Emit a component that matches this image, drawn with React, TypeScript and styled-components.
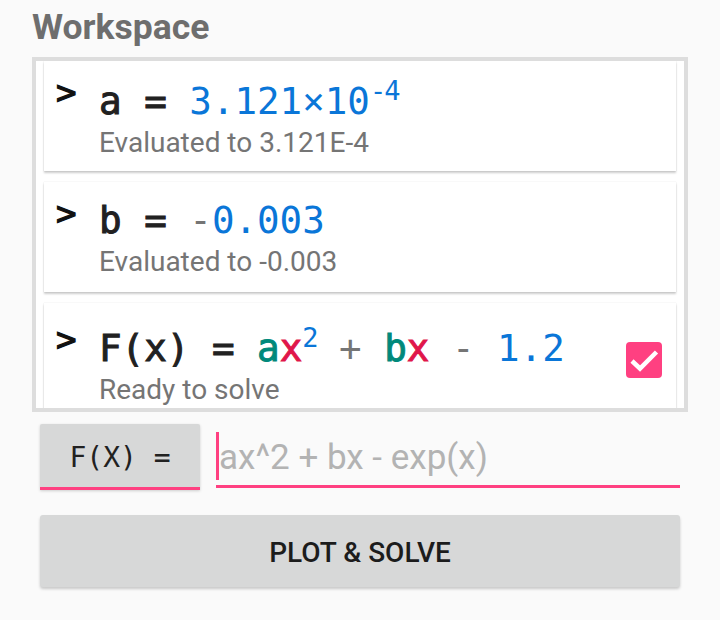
import React from "react";
import styled, { createGlobalStyle } from "styled-components";

const GlobalStyle = createGlobalStyle`
  html, body { margin: 0; padding: 0; background: #fafafa; }
  body { font-family: Roboto, "Noto Sans", sans-serif; }
  * { box-sizing: border-box; }
`;

const MONO = `"DejaVu Sans Mono", "Liberation Mono", monospace`;

const Page = styled.main`
  width: 720px;
  height: 620px;
  padding: 7px 32px 0 32px;
  background: #fafafa;
`;

const Title = styled.h1`
  margin: 0;
  font-family: Roboto, sans-serif;
  font-weight: 700;
  font-size: 35.5px;
  line-height: 40px;
  color: #6e6e6e;
`;

const Workspace = styled.section`
  margin-top: 10px;
  height: 355px;
  border: 4px solid #dddddd;
  background: #ffffff;
  overflow: hidden;
`;

const CardList = styled.div`
  display: flex;
  flex-direction: column;
  gap: 11px;
  padding: 0 8px 12px 8px;
`;

const Card = styled.article<{ $padTop: number }>`
  flex: none;
  height: 110px;
  display: flex;
  align-items: flex-start;
  padding: ${(p) => p.$padTop}px 14px 0 14px;
  background: #ffffff;
  box-shadow: 0 2px 2px rgba(0, 0, 0, 0.2), 0 0 1px rgba(0, 0, 0, 0.15);
`;

const Prompt = styled.span`
  flex: none;
  width: 43px;
  font-family: ${MONO};
  font-weight: 400;
  -webkit-text-stroke: 1.2px #111;
  font-size: 34px;
  line-height: 34px;
  color: #111;
  margin-top: -2px;
  margin-left: -2px;
`;

const Body = styled.div`
  flex: 1;
  min-width: 0;
  display: flex;
  flex-direction: column;
`;

const Expr = styled.div`
  font-family: ${MONO};
  font-size: 37.5px;
  line-height: 44px;
  font-weight: 400;
  -webkit-text-stroke: 1px #212121;
  color: #212121;
  white-space: pre;
`;

const Sym = styled.span<{ $c: string }>`
  color: ${(p) => p.$c};
  -webkit-text-stroke: 1px ${(p) => p.$c};
`;

const Num = styled.span`
  color: #0a76d8;
  -webkit-text-stroke: 0;
`;

const Op = styled.span`
  color: #757575;
  -webkit-text-stroke: 0;
`;

const Sup = styled.sup`
  font-size: 27px;
  line-height: 1;
  vertical-align: 14px;
  color: #0a76d8;
  -webkit-text-stroke: 0;
  letter-spacing: -2px;
`;

const Note = styled.div`
  font-family: Roboto, sans-serif;
  font-size: 28px;
  line-height: 40px;
  color: #757575;
  white-space: nowrap;
`;

const CheckBox = styled.span`
  flex: none;
  width: 36px;
  height: 36px;
  margin-top: 18px;
  border-radius: 4px;
  background: #ff4081;
  display: flex;
  align-items: center;
  justify-content: center;
`;

const InputRow = styled.div`
  display: flex;
  align-items: flex-start;
  gap: 16px;
  margin: 12px 8px 0 8px;
`;

const FxButton = styled.button`
  flex: none;
  width: 160px;
  height: 66px;
  padding: 3px 0 0 0;
  border: none;
  border-bottom: 3px solid #ff4081;
  border-radius: 2px 2px 0 0;
  background: #d7d8d8;
  box-shadow: 0 1px 3px rgba(0, 0, 0, 0.18);
  font-family: ${MONO};
  font-size: 28px;
  color: #212121;
  white-space: pre;
  display: flex;
  align-items: center;
  justify-content: center;
`;

const Field = styled.label`
  flex: 1;
  height: 64px;
  display: flex;
  align-items: flex-start;
  border-bottom: 3px solid #ff4081;
`;

const Caret = styled.span`
  flex: none;
  width: 3px;
  height: 48px;
  margin-top: 8px;
  background: #ff4081;
`;

const TextInput = styled.input`
  flex: 1;
  min-width: 0;
  height: 61px;
  padding: 5px 0 0 0;
  margin: 0;
  border: none;
  outline: none;
  background: transparent;
  font-family: Roboto, sans-serif;
  font-size: 35px;
  color: #212121;
  &::placeholder { color: #b3b3b3; }
`;

const SolveButton = styled.button`
  display: flex;
  align-items: center;
  justify-content: center;
  width: 640px;
  height: 72px;
  margin: 25px 8px 0 8px;
  padding: 3px 0 0 0;
  border: none;
  border-radius: 3px;
  background: #d7d8d8;
  box-shadow: 0 2px 3px rgba(0, 0, 0, 0.2);
  font-family: Roboto, sans-serif;
  font-weight: 500;
  font-size: 28px;
  color: #1c1c1c;
`;

const TEAL = "#00897b";
const RED = "#e0164a";

export default function App() {
  return (
    <>
      <GlobalStyle />
      <Page>
        <Title>Workspace</Title>
        <Workspace>
          <CardList>
            <Card $padTop={16}>
              <Prompt>&gt;</Prompt>
              <Body>
                <Expr>
                  a = <Num>3.121×10</Num>
                  <Sup>-4</Sup>
                </Expr>
                <Note>Evaluated to 3.121E-4</Note>
              </Body>
            </Card>
            <Card $padTop={16}>
              <Prompt>&gt;</Prompt>
              <Body>
                <Expr>
                  b = <Op>-</Op>
                  <Num>0.003</Num>
                </Expr>
                <Note>Evaluated to -0.003</Note>
              </Body>
            </Card>
            <Card $padTop={21}>
              <Prompt>&gt;</Prompt>
              <Body>
                <Expr>
                  F(x) = <Sym $c={TEAL}>a</Sym>
                  <Sym $c={RED}>x</Sym>
                  <Sup>2</Sup> <Op>+</Op> <Sym $c={TEAL}>b</Sym>
                  <Sym $c={RED}>x</Sym> <Op>-</Op> <Num>1.2</Num>
                </Expr>
                <Note>Ready to solve</Note>
              </Body>
              <CheckBox>
                <svg width="36" height="36" viewBox="0 0 36 36">
                  <path d="M6 19 L14 26.5 L30.5 10" fill="none" stroke="#fff" strokeWidth="4.5" />
                </svg>
              </CheckBox>
            </Card>
          </CardList>
        </Workspace>
        <InputRow>
          <FxButton>F(X) =</FxButton>
          <Field>
            <Caret />
            <TextInput placeholder="ax^2 + bx - exp(x)" />
          </Field>
        </InputRow>
        <SolveButton>PLOT &amp; SOLVE</SolveButton>
      </Page>
    </>
  );
}
